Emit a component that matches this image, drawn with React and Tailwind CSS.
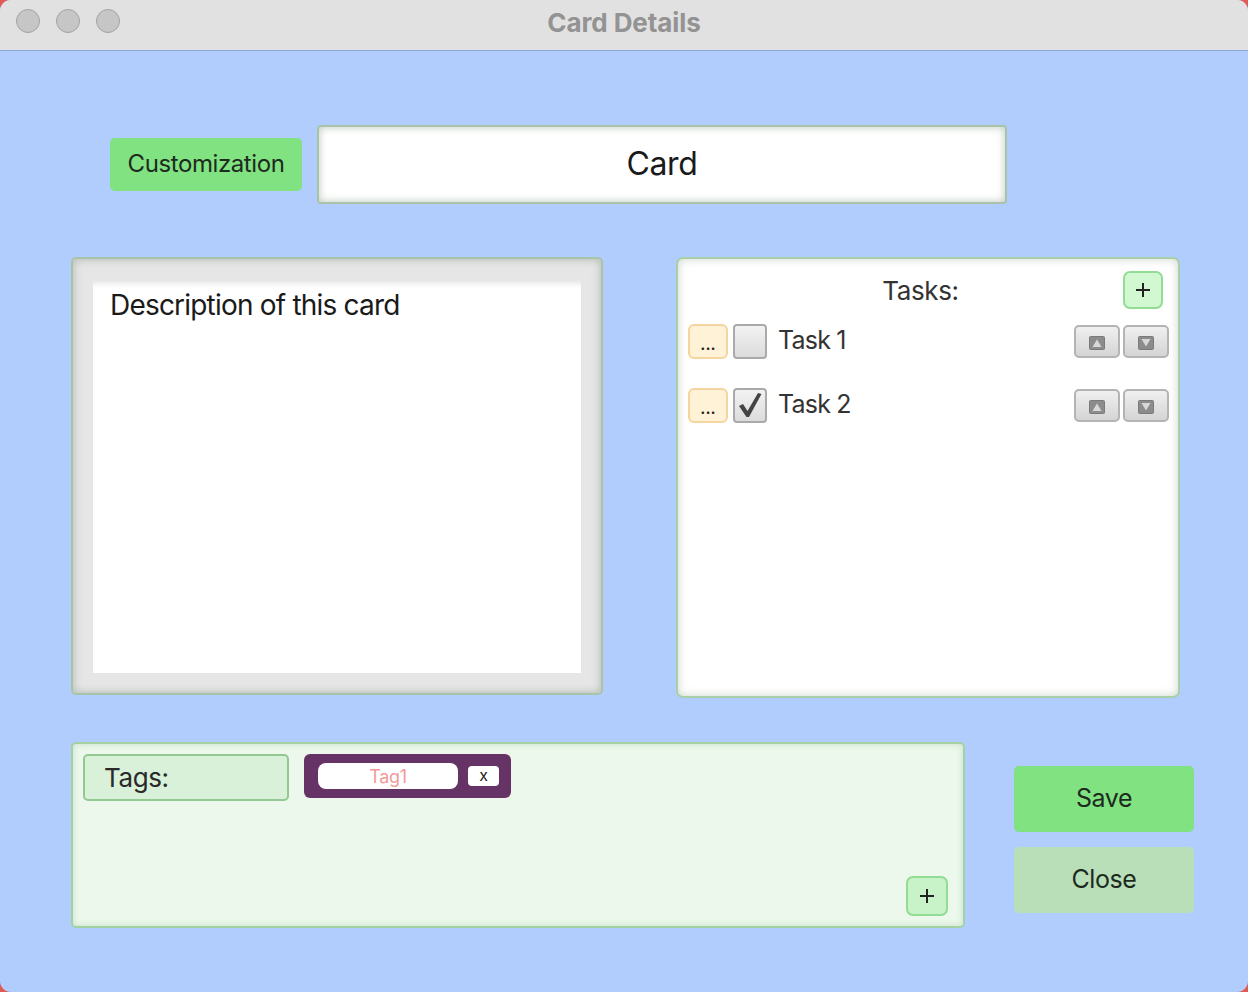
import React from 'react'

const font = { fontFamily: 'Inter, "Noto Sans", sans-serif' }

function Arrow({ up }) {
  return (
    <svg width="16" height="14" viewBox="0 0 16 14">
      <rect x="0.5" y="0.5" width="15" height="13" rx="1" fill="#8c8c8c" stroke="#7a7a7a" />
      {up
        ? <path d="M3.5 11 L8 3.5 L12.5 11 Z" fill="#d8d8d8" />
        : <path d="M3.5 3 L8 10.5 L12.5 3 Z" fill="#d8d8d8" />}
    </svg>
  )
}

function TaskRow({ label, done }) {
  return (
    <div className="flex items-center h-[34px]">
      <button className="w-[40px] h-[35px] rounded-[6px] bg-[#fff2d6] border-2 border-[#f5d59f] text-[#222] text-[16px] font-semibold leading-none pt-[6px]">...</button>
      <div className="ml-[5px] w-[34px] h-[35px] rounded-[4px] border-2 border-[#aaaaaa] bg-gradient-to-b from-[#f2f2f2] to-[#dcdcdc] flex items-center justify-center">
        {done && (
          <svg width="26" height="28" viewBox="0 0 26 28">
            <path d="M2 15 L6 13 L10.5 20 L21 2 L24.5 3 L12 26 L9.5 26 Z" fill="#444" />
          </svg>
        )}
      </div>
      <span className="ml-[11px] text-[25px] text-[#333] tracking-[-0.8px]">{label}</span>
      <div className="ml-auto flex gap-[3px] mr-[-1px]">
        <button className="w-[46px] h-[33px] rounded-[5px] border-2 border-[#b4b4b4] bg-gradient-to-b from-[#f0f0f0] to-[#d4d4d4] flex items-center justify-center pt-[4px]"><Arrow up /></button>
        <button className="w-[46px] h-[33px] rounded-[5px] border-2 border-[#b4b4b4] bg-gradient-to-b from-[#f0f0f0] to-[#d4d4d4] flex items-center justify-center pt-[4px]"><Arrow /></button>
      </div>
    </div>
  )
}

export default function App() {
  return (
    <div className="w-[1248px] h-[992px] bg-[#e05a55] overflow-hidden" style={font}>
      <div className="w-full h-full rounded-[11px] overflow-hidden flex flex-col bg-[#b1cdfd]">
        {/* title bar */}
        <div className="h-[51px] shrink-0 bg-[#e1e1e1] border-b border-[#8fa9d8] flex items-center relative">
          <div className="flex gap-[16px] pl-[16px] pb-[8px]">
            <span className="w-[24px] h-[24px] rounded-full bg-[#c6c6c6] border border-[#a3a3a3]" />
            <span className="w-[24px] h-[24px] rounded-full bg-[#c6c6c6] border border-[#a3a3a3]" />
            <span className="w-[24px] h-[24px] rounded-full bg-[#c6c6c6] border border-[#a3a3a3]" />
          </div>
          <div className="absolute left-0 right-0 top-[3px] text-center text-[26px] font-bold text-[#939393] tracking-[-0.1px]">Card Details</div>
        </div>

        {/* body */}
        <div className="flex-1 pt-[74px]">
          <div className="flex items-center pl-[110px] h-[78px]">
            <button className="w-[192px] h-[53px] rounded-[5px] bg-[#80e281] text-[24px] text-[#1f2a1f] tracking-[-0.4px]">Customization</button>
            <div className="ml-[15px] w-[690px] h-[79px] rounded-[4px] border-2 border-[#a9c3a9] bg-white shadow-[inset_0_0_8px_rgba(140,160,140,0.6)] flex items-center justify-center text-[32px] text-[#1a1a1a] tracking-[-0.4px]">Card</div>
          </div>

          <div className="flex items-start mt-[54px] pl-[71px]">
            <div className="w-[532px] h-[438px] rounded-[5px] border-2 border-[#a9c3a9] bg-[#e6e6e6] shadow-[inset_0_0_10px_rgba(120,140,120,0.5)] p-[20px] pt-[22px]">
              <div className="w-full h-full bg-white shadow-[inset_0_6px_6px_-4px_rgba(0,0,0,0.12)] pl-[17px] pt-[3px] text-[28px] text-[#1a1a1a] tracking-[-0.8px]">Description of this card</div>
            </div>

            <div className="ml-[73px] w-[504px] h-[441px] rounded-[7px] border-2 border-[#a8cfa8] bg-white shadow-[inset_0_0_8px_rgba(150,170,150,0.5)] px-[10px] pt-[12px]">
              <div className="relative h-[38px] flex items-center justify-center">
                <span className="text-[26px] text-[#333] tracking-[-0.4px] ml-[-15px]">Tasks:</span>
                <button className="absolute right-[5px] top-0 w-[40px] h-[38px] rounded-[7px] bg-[#d2f8d2] border-2 border-[#93dc93] flex items-center justify-center">
                  <svg width="16" height="16" viewBox="0 0 16 16"><path d="M8 1v14M1 8h14" stroke="#222" strokeWidth="2" /></svg>
                </button>
              </div>
              <div className="mt-[15px] flex flex-col gap-[30px]">
                <TaskRow label="Task 1" />
                <TaskRow label="Task 2" done />
              </div>
            </div>
          </div>

          <div className="flex items-start mt-[44px] pl-[71px]">
            <div className="w-[894px] h-[186px] rounded-[5px] border-2 border-[#a3d1a3] bg-[#ebf8eb] shadow-[inset_0_0_6px_rgba(150,180,150,0.4)] px-[10px] pt-[10px] flex flex-col">
              <div className="flex items-start">
                <div className="w-[206px] h-[47px] rounded-[5px] border-2 border-[#93c893] bg-[#d9f0d9] pl-[19px] flex items-center text-[26px] text-[#2a2a2a] tracking-[-0.4px]">Tags:</div>
                <div className="ml-[15px] w-[207px] h-[44px] rounded-[6px] bg-[#653366] flex items-center pl-[14px]">
                  <div className="w-[140px] h-[26px] rounded-[8px] bg-white flex items-center justify-center text-[18px] text-[#f29a9a] tracking-[-0.3px]">Tag1</div>
                  <div className="ml-[10px] w-[31px] h-[20px] rounded-[4px] bg-white flex items-center justify-center text-[16px] text-[#222] leading-none pb-[2px]">x</div>
                </div>
              </div>
              <div className="mt-auto mb-[10px] flex justify-end pr-[5px]">
                <button className="w-[42px] h-[40px] rounded-[7px] bg-[#c8f2c8] border-2 border-[#93dc93] flex items-center justify-center">
                  <svg width="16" height="16" viewBox="0 0 16 16"><path d="M8 1v14M1 8h14" stroke="#222" strokeWidth="2" /></svg>
                </button>
              </div>
            </div>

            <div className="ml-[49px] mt-[24px] flex flex-col gap-[15px]">
              <button className="w-[180px] h-[66px] rounded-[5px] bg-[#80e281] text-[25px] text-[#1f2a1f] tracking-[-0.4px]">Save</button>
              <button className="w-[180px] h-[66px] rounded-[5px] bg-[#b9dfb9] text-[25px] text-[#1f2a1f] tracking-[-0.4px]">Close</button>
            </div>
          </div>
        </div>
      </div>
    </div>
  )
}
